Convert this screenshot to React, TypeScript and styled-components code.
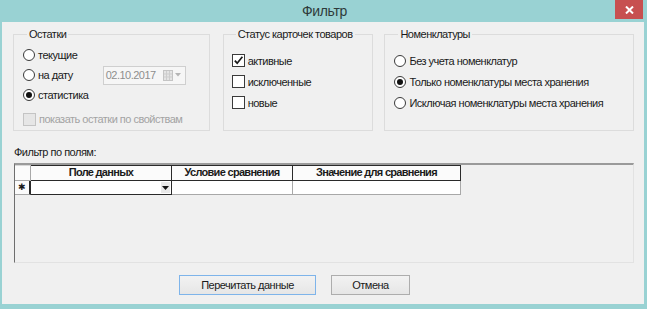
import React from "react";
import styled, { createGlobalStyle } from "styled-components";

const GlobalStyle = createGlobalStyle`
  html, body {
    margin: 0;
    padding: 0;
    background: #99d2d3;
  }
  body {
    font-family: "Liberation Sans", Arial, sans-serif;
    font-size: 11px;
    letter-spacing: -0.5px;
    color: #1a1a1a;
  }
`;

const Window = styled.div`
  width: 647px;
  height: 309px;
  background: #99d2d3;
  display: flex;
  flex-direction: column;
  box-sizing: border-box;
`;

const TitleBar = styled.div`
  height: 22px;
  flex: none;
  display: grid;
  grid-template-columns: 1fr auto 1fr;
  align-items: start;
`;

const Title = styled.div`
  grid-column: 2;
  font-size: 14px;
  letter-spacing: -0.3px;
  line-height: 22px;
  color: #2e3a3a;
  padding-left: 2px;
`;

const CloseButton = styled.button`
  grid-column: 3;
  justify-self: end;
  width: 28px;
  height: 19px;
  margin-right: 4px;
  border: none;
  padding: 0;
  background: #c75050;
  display: flex;
  align-items: center;
  justify-content: center;
  cursor: pointer;
`;

const Body = styled.div`
  flex: 1;
  margin: 0 3px 5px 2px;
  background: #f0f0f0;
  padding: 6px 10px 0 11px;
  display: flex;
  flex-direction: column;
`;

const GroupRow = styled.div`
  display: flex;
  align-items: flex-start;
`;

const Group = styled.fieldset<{ $width: number; $gap?: number; $padTop: number; $padLeft: number }>`
  margin: 0 0 0 ${(p) => p.$gap ?? 0}px;
  width: ${(p) => p.$width}px;
  height: 103px;
  box-sizing: border-box;
  border: 1px solid #dcdcdc;
  padding: ${(p) => p.$padTop}px 0 0 ${(p) => p.$padLeft}px;
  min-width: 0;
  display: flex;
  flex-direction: column;
`;

const Legend = styled.legend`
  margin-left: 4px;
  padding: 0 2px;
  font-size: 11px;
  line-height: 13px;
  color: #1a1a1a;
`;

const OptionRow = styled.div<{ $h: number; $mt?: number }>`
  height: ${(p) => p.$h}px;
  margin-top: ${(p) => p.$mt ?? 0}px;
  display: flex;
  align-items: center;
`;

const OptionText = styled.span<{ $disabled?: boolean }>`
  margin-left: 3px;
  color: ${(p) => (p.$disabled ? "#a3a3a3" : "#1a1a1a")};
  white-space: nowrap;
`;

const RadioCircle = styled.span<{ $checked?: boolean }>`
  width: 12px;
  height: 12px;
  flex: none;
  box-sizing: border-box;
  border: 1px solid #3a3a3a;
  border-radius: 50%;
  background: #fff;
  display: flex;
  align-items: center;
  justify-content: center;

  &::after {
    content: "";
    width: 6px;
    height: 6px;
    border-radius: 50%;
    background: #111;
    display: ${(p) => (p.$checked ? "block" : "none")};
  }
`;

const CheckBox = styled.span<{ $disabled?: boolean }>`
  width: 13px;
  height: 13px;
  flex: none;
  box-sizing: border-box;
  border: 1px solid ${(p) => (p.$disabled ? "#c4c4c4" : "#3a3a3a")};
  background: ${(p) => (p.$disabled ? "#e6e6e6" : "#fff")};
  display: flex;
  align-items: center;
  justify-content: center;
`;

const DateBox = styled.div`
  margin-left: auto;
  margin-right: 23px;
  width: 83px;
  height: 19px;
  box-sizing: border-box;
  border: 1px solid #cfcfcf;
  background: #f6f6f6;
  display: flex;
  align-items: center;
  padding-left: 2px;
  color: #8e8e8e;
`;

const DateIcon = styled.span`
  margin-left: auto;
  margin-right: 4px;
  display: flex;
  align-items: center;
  gap: 2px;
`;

const SectionLabel = styled.div`
  margin-top: 15px;
  margin-left: 1px;
  line-height: 13px;
`;

const GridFrame = styled.div`
  margin: 4px 0 0 1px;
  height: 100px;
  box-sizing: border-box;
  border-top: 2px solid #9a9a9a;
  border-left: 1px solid #6e6e6e;
  border-right: 1px solid #e2e2e2;
  border-bottom: 1px solid #e2e2e2;
  background: #f0f0f0;
`;

const GridTable = styled.div`
  display: grid;
  grid-template-columns: 16px 141px 121px 168px;
  grid-template-rows: 16px 14px;
  width: max-content;
`;

const HeadCell = styled.div<{ $corner?: boolean }>`
  box-sizing: border-box;
  background: #fbfbfb;
  border-right: 1px solid ${(p) => (p.$corner ? "#a8a8a8" : "#2a2a2a")};
  border-bottom: 1px solid ${(p) => (p.$corner ? "#a8a8a8" : "#2a2a2a")};
  border-top: 1px solid ${(p) => (p.$corner ? "#d8d8d8" : "#2a2a2a")};
  font-weight: bold;
  letter-spacing: -0.7px;
  text-align: center;
  line-height: 13px;
  color: #1a1a1a;
  white-space: nowrap;
`;

const RowHead = styled.div`
  box-sizing: border-box;
  background: #fbfbfb;
  border-right: 2px solid #2a2a2a;
  border-bottom: 1px solid #a8a8a8;
  display: flex;
  align-items: center;
  justify-content: center;
  font-size: 9px;
  line-height: 9px;
`;

const DataCell = styled.div<{ $current?: boolean }>`
  box-sizing: border-box;
  background: #fff;
  border-right: 1px solid ${(p) => (p.$current ? "#2a2a2a" : "#a8a8a8")};
  border-bottom: 1px solid ${(p) => (p.$current ? "#2a2a2a" : "#a8a8a8")};
  display: flex;
  align-items: center;
  justify-content: flex-end;
`;

const DropArrow = styled.span`
  width: 9px;
  height: 11px;
  margin-right: 1px;
  background: #e8e8e8;
  display: flex;
  align-items: center;
  justify-content: center;
`;

const ButtonRow = styled.div`
  margin-top: 12px;
  padding-left: 166px;
  display: flex;
  gap: 15px;
`;

const Button = styled.button<{ $primary?: boolean; $w: number }>`
  width: ${(p) => p.$w}px;
  height: 20px;
  padding: 0;
  font-family: "Liberation Sans", Arial, sans-serif;
  font-size: 11px;
  letter-spacing: -0.5px;
  color: #1a1a1a;
  border: 1px solid ${(p) => (p.$primary ? "#7eb4ea" : "#adadad")};
  background: linear-gradient(#f2f2f2, #e6e6e6);
  cursor: pointer;
`;

const Radio = ({ label, checked, $h, $mt }: { label: string; checked?: boolean; $h: number; $mt?: number }) => (
  <OptionRow $h={$h} $mt={$mt}>
    <RadioCircle $checked={checked} />
    <OptionText>{label}</OptionText>
  </OptionRow>
);

const Check = ({ label, checked, disabled, $h, $mt }: { label: string; checked?: boolean; disabled?: boolean; $h: number; $mt?: number }) => (
  <OptionRow $h={$h} $mt={$mt}>
    <CheckBox $disabled={disabled}>
      {checked && (
        <svg width="11" height="11" viewBox="0 0 11 11">
          <path d="M1.8 5.6 L4.2 8.2 L9.4 1.8" fill="none" stroke="#1a1a1a" strokeWidth="1.7" />
        </svg>
      )}
    </CheckBox>
    <OptionText $disabled={disabled}>{label}</OptionText>
  </OptionRow>
);

export default function App() {
  return (
    <>
      <GlobalStyle />
      <Window>
        <TitleBar>
          <Title>Фильтр</Title>
          <CloseButton aria-label="Закрыть">
            <svg width="9" height="8" viewBox="0 0 9 8">
              <path d="M1 0.5 L8 7.5 M8 0.5 L1 7.5" stroke="#fff" strokeWidth="2" />
            </svg>
          </CloseButton>
        </TitleBar>
        <Body>
          <GroupRow>
            <Group $width={197} $padTop={4} $padLeft={9}>
              <Legend>Остатки</Legend>
              <Radio label="текущие" $h={20} />
              <OptionRow $h={20}>
                <RadioCircle />
                <OptionText>на дату</OptionText>
                <DateBox>
                  02.10.2017
                  <DateIcon>
                    <svg width="10" height="11" viewBox="0 0 10 11">
                      <rect x="0.5" y="0.5" width="9" height="10" fill="#e4e4e4" stroke="#c4c4c4" />
                      <path d="M3.5 1 V10 M6.5 1 V10 M1 4 H9 M1 7 H9" stroke="#cdcdcd" />
                    </svg>
                    <svg width="6" height="4" viewBox="0 0 6 4">
                      <path d="M0 0 H6 L3 3.5 Z" fill="#b5b5b5" />
                    </svg>
                  </DateIcon>
                </DateBox>
              </OptionRow>
              <Radio label="статистика" checked $h={20} />
              <Check label="показать остатки по свойствам" disabled $h={20} $mt={4} />
            </Group>
            <Group $width={151} $gap={13} $padTop={9} $padLeft={8}>
              <Legend>Статус карточек товаров</Legend>
              <Check label="активные" checked $h={21} />
              <Check label="исключенные" $h={21} />
              <Check label="новые" $h={21} />
            </Group>
            <Group $width={250} $gap={11} $padTop={9} $padLeft={9}>
              <Legend>Номенклатуры</Legend>
              <Radio label="Без учета номенклатур" $h={21} />
              <Radio label="Только номенклатуры места хранения" checked $h={21} />
              <Radio label="Исключая номенклатуры места хранения" $h={21} />
            </Group>
          </GroupRow>

          <SectionLabel>Фильтр по полям:</SectionLabel>
          <GridFrame>
            <GridTable>
              <HeadCell $corner />
              <HeadCell>Поле данных</HeadCell>
              <HeadCell>Условие сравнения</HeadCell>
              <HeadCell>Значение для сравнения</HeadCell>
              <RowHead>✱</RowHead>
              <DataCell $current>
                <DropArrow>
                  <svg width="7" height="4" viewBox="0 0 7 4">
                    <path d="M0 0 H7 L3.5 4 Z" fill="#111" />
                  </svg>
                </DropArrow>
              </DataCell>
              <DataCell />
              <DataCell />
            </GridTable>
          </GridFrame>

          <ButtonRow>
            <Button $primary $w={137}>Перечитать данные</Button>
            <Button $w={79}>Отмена</Button>
          </ButtonRow>
        </Body>
      </Window>
    </>
  );
}
